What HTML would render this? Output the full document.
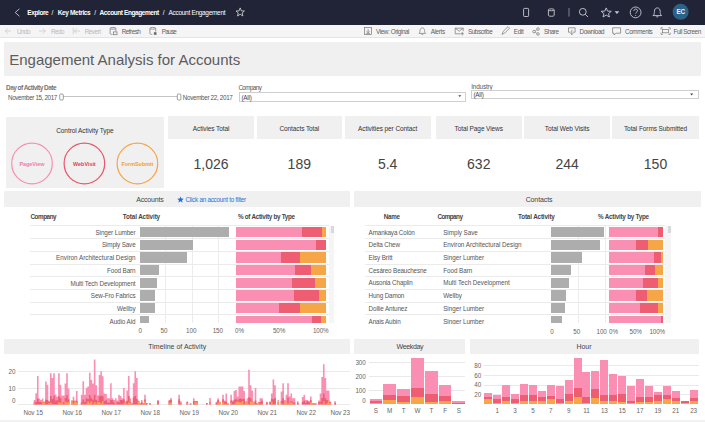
<!DOCTYPE html>
<html><head><meta charset="utf-8"><style>
*{margin:0;padding:0;box-sizing:border-box}
html,body{width:705px;height:422px;overflow:hidden;background:#fff;font-family:"Liberation Sans",sans-serif}
.t{position:absolute;white-space:nowrap;line-height:1.15}
.r{position:absolute}
svg{position:absolute;left:0;top:0;overflow:visible}
</style></head><body>

<div class="r" style="left:0.00px;top:0.00px;width:705.00px;height:24.50px;background:#212437;"></div>
<div class="t" style="left:27.30px;top:8.86px;font-size:6.5px;font-weight:700;color:#ffffff;letter-spacing:-0.406px;">Explore</div>
<div class="t" style="left:51.60px;top:8.86px;font-size:6.5px;font-weight:400;color:#ffffff;">/</div>
<div class="t" style="left:57.70px;top:8.86px;font-size:6.5px;font-weight:700;color:#ffffff;letter-spacing:-0.345px;">Key Metrics</div>
<div class="t" style="left:94.20px;top:8.86px;font-size:6.5px;font-weight:400;color:#ffffff;">/</div>
<div class="t" style="left:99.60px;top:8.86px;font-size:6.5px;font-weight:700;color:#ffffff;letter-spacing:-0.428px;">Account Engagement</div>
<div class="t" style="left:162.80px;top:8.86px;font-size:6.5px;font-weight:400;color:#ffffff;">/</div>
<div class="t" style="left:168.60px;top:8.86px;font-size:6.5px;font-weight:400;color:#ffffff;letter-spacing:-0.309px;">Account Engagement</div>
<svg width="705" height="25" viewBox="0 0 705 25">
<g fill="none" stroke="#c8cad2" stroke-width="0.9">
<path d="M19.4 8.9 L15.2 12.5 L19.4 16.2"/>
<path d="M240.2 7.9 L241.4 10.9 L244.4 11 L242.1 13 L242.9 16 L240.2 14.3 L237.5 16 L238.3 13 L236 11 L239 10.9 Z"/>
<rect x="523.6" y="8.4" width="5" height="8.1" rx="0.8"/>
<path d="M548.4 9.8 v5.6 c0 1.2 5.8 1.2 5.8 0 v-5.6 M548.4 9.8 c0 -1.3 5.8 -1.3 5.8 0 c0 1.3 -5.8 1.3 -5.8 0"/>
<path d="M569 8 v8.6" stroke="#8a8da0"/>
<circle cx="582.8" cy="11.8" r="3.4"/>
<path d="M585.3 14.3 L588 17"/>
<path d="M606.2 7.9 L607.6 11.1 L611.3 11.3 L608.5 13.6 L609.4 17 L606.2 15.1 L603 17 L603.9 13.6 L601.1 11.3 L604.8 11.1 Z"/>
<circle cx="635.6" cy="12.4" r="5.4"/>
<path d="M633.9 10.9 c0 -2.4 3.6 -2.4 3.6 -0.2 c0 1.4 -1.8 1.5 -1.8 2.9" />
<path d="M653 15.6 h8.6 c-1.4 -1.2 -1.4 -2.5 -1.4 -4.3 c0 -2 -1.3 -3.4 -2.9 -3.4 c-1.6 0 -2.9 1.4 -2.9 3.4 c0 1.8 0 3.1 -1.4 4.3 z M656.3 16.8 h2"/>
</g>
<path d="M614.6 11.3 h4.7 l-2.35 2.6 z" fill="#c8cad2"/>
<circle cx="635.7" cy="15.4" r="0.5" fill="#c8cad2"/>
<circle cx="680.6" cy="11.8" r="8" fill="#2c6189"/>
</svg>
<div class="t" style="left:680.60px;transform:translateX(-50%);top:8.47px;font-size:6.3px;font-weight:700;color:#f4f6f8;letter-spacing:-0.275px;">EC</div>
<div class="r" style="left:0.00px;top:24.50px;width:705.00px;height:13.00px;background:#f5f5f5;"></div>
<div class="r" style="left:0.00px;top:37.20px;width:705.00px;height:1.00px;background:#e4e4e4;"></div>
<div class="t" style="left:17.00px;top:27.97px;font-size:6.3px;font-weight:400;color:#b9b9b9;letter-spacing:-0.516px;">Undo</div>
<div class="t" style="left:51.00px;top:27.97px;font-size:6.3px;font-weight:400;color:#b9b9b9;letter-spacing:-0.516px;">Redo</div>
<div class="t" style="left:84.80px;top:27.97px;font-size:6.3px;font-weight:400;color:#b9b9b9;letter-spacing:-0.491px;">Revert</div>
<div class="t" style="left:121.70px;top:27.97px;font-size:6.3px;font-weight:400;color:#606060;letter-spacing:-0.480px;">Refresh</div>
<div class="t" style="left:161.70px;top:27.97px;font-size:6.3px;font-weight:400;color:#606060;letter-spacing:-0.672px;">Pause</div>
<div class="t" style="left:376.10px;top:27.97px;font-size:6.3px;font-weight:400;color:#606060;letter-spacing:-0.410px;">View: Original</div>
<div class="t" style="left:430.70px;top:27.97px;font-size:6.3px;font-weight:400;color:#606060;letter-spacing:-0.335px;">Alerts</div>
<div class="t" style="left:467.90px;top:27.97px;font-size:6.3px;font-weight:400;color:#606060;letter-spacing:-0.402px;">Subscribe</div>
<div class="t" style="left:513.80px;top:27.97px;font-size:6.3px;font-weight:400;color:#606060;letter-spacing:-0.340px;">Edit</div>
<div class="t" style="left:544.10px;top:27.97px;font-size:6.3px;font-weight:400;color:#606060;letter-spacing:-0.482px;">Share</div>
<div class="t" style="left:579.60px;top:27.97px;font-size:6.3px;font-weight:400;color:#606060;letter-spacing:-0.452px;">Download</div>
<div class="t" style="left:625.00px;top:27.97px;font-size:6.3px;font-weight:400;color:#606060;letter-spacing:-0.382px;">Comments</div>
<div class="t" style="left:673.50px;top:27.97px;font-size:6.3px;font-weight:400;color:#606060;letter-spacing:-0.414px;">Full Screen</div>
<svg width="705" height="40" viewBox="0 0 705 40">
<g fill="none" stroke="#c8c8c8" stroke-width="0.75">
<path d="M11 31 H5.2 M7.8 28.4 L5.2 31 L7.8 33.6"/>
<path d="M39 31 H45.4 M42.8 28.4 L45.4 31 L42.8 33.6"/>
<path d="M73.2 27.8 V34.2 M80 31 H74.4 M76.8 28.4 L74.4 31 L76.8 33.6"/>
</g>
<g fill="none" stroke="#7c7c7c" stroke-width="0.75">
<ellipse cx="113" cy="28.3" rx="2.9" ry="0.9"/>
<path d="M110.1 28.3 v5.2 c0 0.6 1.2 0.9 2.4 1 M115.9 28.3 v3.2"/>
<rect x="113.4" y="31.9" width="3.6" height="2.8" fill="#f5f5f5"/>
<ellipse cx="152.8" cy="28.3" rx="2.9" ry="0.9"/>
<path d="M149.9 28.3 v5.2 c0 0.6 1.2 0.9 2.4 1 M155.7 28.3 v3.4"/>
<rect x="153.9" y="32.2" width="2.6" height="2.6" fill="#6a6a6a" stroke="none"/>
<rect x="364.6" y="27.6" width="7" height="7"/>
<path d="M368.1 29 v3.6 M366.6 31.3 l1.5 1.5 l1.5 -1.5 M366.2 33.4 h3.8"/>
<path d="M419 33.4 h6.6 c-0.9 -0.8 -1 -1.7 -1 -2.9 c0 -1.4 -1 -2.6 -2.3 -2.6 c-1.3 0 -2.3 1.2 -2.3 2.6 c0 1.2 -0.1 2.1 -1 2.9 z M421.5 34.4 h1.6"/>
<path d="M455.2 28.2 h8 v3 M455.2 28.2 v5.6 h5 M455.2 28.2 l4 3 l4 -3 M462.2 32 v3.4 M460.5 33.7 h3.4"/>
<path d="M502 34.4 l1.2 -3 l4.8 -4.8 l1.6 1.6 l-4.8 4.8 z"/>
<circle cx="534" cy="31.6" r="1.3"/><circle cx="538" cy="29" r="1.3"/><circle cx="538" cy="34" r="1.3"/>
<path d="M535.2 31 l1.6 -1.2 M535.2 32.2 l1.6 1.2"/>
<path d="M568.5 27.8 h6.6 v4.4 h-2 M570.6 32.2 h-2.1 v-4.4 M571.8 29.8 v4.8 M570.4 33.2 l1.4 1.4 l1.4 -1.4"/>
<path d="M612.6 27.8 h8 v5.4 h-4.6 l-2 1.8 v-1.8 h-1.4 z"/>
<path d="M661 29.6 v-1.8 h1.8 M668.4 27.8 h1.8 v1.8 M670.2 32.6 v1.8 h-1.8 M662.8 34.4 h-1.8 v-1.8"/>
<rect x="662.6" y="29.4" width="6" height="3.4"/>
</g>
</svg>
<div class="r" style="left:4.10px;top:42.20px;width:697.00px;height:34.00px;background:#f0f0f0;"></div>
<div class="t" style="left:9.20px;top:51.30px;font-size:15px;font-weight:400;color:#5c5c5c;">Engagement Analysis for Accounts</div>
<div class="t" style="left:6.00px;top:84.16px;font-size:6.5px;font-weight:700;color:#5c5c5c;letter-spacing:-0.541px;-webkit-text-stroke:0.1px #fff">Day of Activity Date</div>
<div class="t" style="left:8.00px;top:94.27px;font-size:6.3px;font-weight:400;color:#555;letter-spacing:-0.371px;">November 15, 2017</div>
<div class="t" style="left:182.80px;top:94.27px;font-size:6.3px;font-weight:400;color:#555;letter-spacing:-0.330px;">November 22, 2017</div>
<div class="r" style="left:63.00px;top:95.70px;width:114.30px;height:1.60px;background:#c4c4c4;"></div>
<svg width="705" height="110" viewBox="0 0 705 110">
<rect x="59.7" y="94" width="3.6" height="6" rx="1" fill="#fff" stroke="#777" stroke-width="0.7"/>
<rect x="177.3" y="94" width="3.6" height="6" rx="1" fill="#fff" stroke="#777" stroke-width="0.7"/>
</svg>
<div class="t" style="left:238.40px;top:84.07px;font-size:6.3px;font-weight:400;color:#555;letter-spacing:-0.579px;">Company</div>
<div class="r" style="left:239.00px;top:92.30px;width:227.40px;height:9.50px;background:#fff;border:0.8px solid #cfcfcf;"></div>
<div class="t" style="left:241.50px;top:93.67px;font-size:6.3px;font-weight:400;color:#444;letter-spacing:-0.241px;">(All)</div>
<div class="t" style="left:471.20px;top:82.67px;font-size:6.3px;font-weight:400;color:#555;letter-spacing:-0.126px;">Industry</div>
<div class="r" style="left:471.00px;top:90.30px;width:227.60px;height:9.20px;background:#fff;border:0.8px solid #cfcfcf;"></div>
<div class="t" style="left:473.50px;top:91.47px;font-size:6.3px;font-weight:400;color:#444;letter-spacing:-0.241px;">(All)</div>
<svg width="705" height="110" viewBox="0 0 705 110"><path d="M458.3 95.3 h3 l-1.5 1.8z" fill="#444"/><path d="M690.2 93.6 h3 l-1.5 1.8z" fill="#444"/></svg>
<div class="r" style="left:6.00px;top:117.20px;width:157.50px;height:71.20px;background:#f0f0f0;"></div>
<div class="t" style="left:84.90px;transform:translateX(-50%);top:126.86px;font-size:6.5px;font-weight:400;color:#333;letter-spacing:-0.066px;">Control Activity Type</div>
<svg width="705" height="200" viewBox="0 0 705 200">
<circle cx="32" cy="163.5" r="20.3" fill="none" stroke="#f88fb2" stroke-width="1.2"/>
<circle cx="84.4" cy="163.5" r="20.3" fill="none" stroke="#e9566b" stroke-width="1.2"/>
<circle cx="137.4" cy="163.5" r="20.3" fill="none" stroke="#f6a548" stroke-width="1.2"/>
</svg>
<div class="t" style="left:32.00px;transform:translateX(-50%);top:160.78px;font-size:5.4px;font-weight:700;color:#f27ba5;">PageView</div>
<div class="t" style="left:84.40px;transform:translateX(-50%);top:160.78px;font-size:5.4px;font-weight:700;color:#e03d57;">WebVisit</div>
<div class="t" style="left:137.40px;transform:translateX(-50%);top:160.78px;font-size:5.4px;font-weight:700;color:#f49a37;">FormSubmit</div>
<div class="r" style="left:168.00px;top:116.20px;width:86.20px;height:22.70px;background:#f0f0f0;"></div>
<div class="t" style="left:211.10px;transform:translateX(-50%);top:124.76px;font-size:6.5px;font-weight:400;color:#333;letter-spacing:-0.081px;">Activies Total</div>
<div class="t" style="left:211.10px;transform:translateX(-50%);top:156.06px;font-size:14px;font-weight:400;color:#444;">1,026</div>
<div class="r" style="left:256.50px;top:116.20px;width:85.60px;height:22.70px;background:#f0f0f0;"></div>
<div class="t" style="left:299.30px;transform:translateX(-50%);top:124.76px;font-size:6.5px;font-weight:400;color:#333;letter-spacing:-0.088px;">Contacts Total</div>
<div class="t" style="left:299.30px;transform:translateX(-50%);top:156.06px;font-size:14px;font-weight:400;color:#444;">189</div>
<div class="r" style="left:344.50px;top:116.20px;width:86.30px;height:22.70px;background:#f0f0f0;"></div>
<div class="t" style="left:387.65px;transform:translateX(-50%);top:124.76px;font-size:6.5px;font-weight:400;color:#333;letter-spacing:-0.083px;">Activities per Contact</div>
<div class="t" style="left:387.65px;transform:translateX(-50%);top:156.06px;font-size:14px;font-weight:400;color:#444;">5.4</div>
<div class="r" style="left:435.90px;top:116.20px;width:85.70px;height:22.70px;background:#f0f0f0;"></div>
<div class="t" style="left:478.75px;transform:translateX(-50%);top:124.76px;font-size:6.5px;font-weight:400;color:#333;letter-spacing:-0.093px;">Total Page Views</div>
<div class="t" style="left:478.75px;transform:translateX(-50%);top:156.06px;font-size:14px;font-weight:400;color:#444;">632</div>
<div class="r" style="left:524.30px;top:116.20px;width:85.70px;height:22.70px;background:#f0f0f0;"></div>
<div class="t" style="left:567.15px;transform:translateX(-50%);top:124.76px;font-size:6.5px;font-weight:400;color:#333;letter-spacing:-0.086px;">Total Web Visits</div>
<div class="t" style="left:567.15px;transform:translateX(-50%);top:156.06px;font-size:14px;font-weight:400;color:#444;">244</div>
<div class="r" style="left:612.20px;top:116.20px;width:86.60px;height:22.70px;background:#f0f0f0;"></div>
<div class="t" style="left:655.50px;transform:translateX(-50%);top:124.76px;font-size:6.5px;font-weight:400;color:#333;letter-spacing:-0.093px;">Total Forms Submitted</div>
<div class="t" style="left:655.50px;transform:translateX(-50%);top:156.06px;font-size:14px;font-weight:400;color:#444;">150</div>
<div class="r" style="left:4.20px;top:191.20px;width:346.30px;height:16.30px;background:#f0f0f0;"></div>
<div class="t" style="left:136.20px;top:196.18px;font-size:7px;font-weight:400;color:#444;letter-spacing:-0.162px;">Accounts</div>
<svg width="705" height="210" viewBox="0 0 705 210"><path d="M180.5 196.4 L181.4 198.6 L183.8 198.7 L182 200.2 L182.6 202.5 L180.5 201.2 L178.4 202.5 L179 200.2 L177.2 198.7 L179.6 198.6 Z" fill="#2a6fd6"/></svg>
<div class="t" style="left:185.50px;top:196.47px;font-size:6.3px;font-weight:400;color:#2a6fd6;letter-spacing:-0.245px;">Click an account to filter</div>
<div class="t" style="left:30.50px;top:212.97px;font-size:6.3px;font-weight:700;color:#444;letter-spacing:-0.429px;">Company</div>
<div class="t" style="right:545.00px;top:212.97px;font-size:6.3px;font-weight:700;color:#444;letter-spacing:-0.117px;">Total Activity</div>
<div class="t" style="left:238.00px;top:212.97px;font-size:6.3px;font-weight:700;color:#444;letter-spacing:-0.278px;">% of Activity by Type</div>
<div style="position:absolute;left:0;top:0;width:705px;height:322.6px;overflow:hidden">
<div class="r" style="left:164.50px;top:226.00px;width:0.80px;height:97.00px;background:#ececec;"></div>
<div class="r" style="left:191.50px;top:226.00px;width:0.80px;height:97.00px;background:#ececec;"></div>
<div class="r" style="left:218.10px;top:226.00px;width:0.80px;height:97.00px;background:#ececec;"></div>
<div class="r" style="left:29.50px;top:225.40px;width:299.70px;height:1.10px;background:#ebebeb;"></div>
<div class="r" style="left:139.60px;top:226.90px;width:89.50px;height:10.20px;background:#adadad;"></div>
<div class="r" style="left:235.60px;top:226.90px;width:90.20px;height:10.20px;background:#fb8fb3;"></div>
<div class="r" style="left:302.35px;top:226.90px;width:23.45px;height:10.20px;background:#ee5d71;"></div>
<div class="r" style="left:322.19px;top:226.90px;width:3.61px;height:10.20px;background:#f7a647;"></div>
<div class="r" style="left:29.50px;top:238.11px;width:299.70px;height:1.10px;background:#ebebeb;"></div>
<div class="r" style="left:139.60px;top:239.61px;width:53.70px;height:10.20px;background:#adadad;"></div>
<div class="r" style="left:235.60px;top:239.61px;width:90.20px;height:10.20px;background:#fb8fb3;"></div>
<div class="r" style="left:315.88px;top:239.61px;width:9.92px;height:10.20px;background:#ee5d71;"></div>
<div class="r" style="left:325.80px;top:239.61px;width:0.00px;height:10.20px;background:#f7a647;"></div>
<div class="r" style="left:29.50px;top:250.82px;width:299.70px;height:1.10px;background:#ebebeb;"></div>
<div class="r" style="left:139.60px;top:252.32px;width:47.80px;height:10.20px;background:#adadad;"></div>
<div class="r" style="left:235.60px;top:252.32px;width:90.20px;height:10.20px;background:#fb8fb3;"></div>
<div class="r" style="left:280.70px;top:252.32px;width:45.10px;height:10.20px;background:#ee5d71;"></div>
<div class="r" style="left:299.64px;top:252.32px;width:26.16px;height:10.20px;background:#f7a647;"></div>
<div class="r" style="left:29.50px;top:263.53px;width:299.70px;height:1.10px;background:#ebebeb;"></div>
<div class="r" style="left:139.60px;top:265.03px;width:19.00px;height:10.20px;background:#adadad;"></div>
<div class="r" style="left:235.60px;top:265.03px;width:90.20px;height:10.20px;background:#fb8fb3;"></div>
<div class="r" style="left:295.13px;top:265.03px;width:30.67px;height:10.20px;background:#ee5d71;"></div>
<div class="r" style="left:311.37px;top:265.03px;width:14.43px;height:10.20px;background:#f7a647;"></div>
<div class="r" style="left:29.50px;top:276.24px;width:299.70px;height:1.10px;background:#ebebeb;"></div>
<div class="r" style="left:139.60px;top:277.74px;width:17.60px;height:10.20px;background:#adadad;"></div>
<div class="r" style="left:235.60px;top:277.74px;width:90.20px;height:10.20px;background:#fb8fb3;"></div>
<div class="r" style="left:292.43px;top:277.74px;width:33.37px;height:10.20px;background:#ee5d71;"></div>
<div class="r" style="left:314.98px;top:277.74px;width:10.82px;height:10.20px;background:#f7a647;"></div>
<div class="r" style="left:29.50px;top:288.95px;width:299.70px;height:1.10px;background:#ebebeb;"></div>
<div class="r" style="left:139.60px;top:290.45px;width:15.30px;height:10.20px;background:#adadad;"></div>
<div class="r" style="left:235.60px;top:290.45px;width:90.20px;height:10.20px;background:#fb8fb3;"></div>
<div class="r" style="left:294.23px;top:290.45px;width:31.57px;height:10.20px;background:#ee5d71;"></div>
<div class="r" style="left:319.49px;top:290.45px;width:6.31px;height:10.20px;background:#f7a647;"></div>
<div class="r" style="left:29.50px;top:301.66px;width:299.70px;height:1.10px;background:#ebebeb;"></div>
<div class="r" style="left:139.60px;top:303.16px;width:15.30px;height:10.20px;background:#adadad;"></div>
<div class="r" style="left:235.60px;top:303.16px;width:90.20px;height:10.20px;background:#fb8fb3;"></div>
<div class="r" style="left:278.90px;top:303.16px;width:46.90px;height:10.20px;background:#ee5d71;"></div>
<div class="r" style="left:299.64px;top:303.16px;width:26.16px;height:10.20px;background:#f7a647;"></div>
<div class="r" style="left:29.50px;top:314.37px;width:299.70px;height:1.10px;background:#ebebeb;"></div>
<div class="r" style="left:139.60px;top:315.87px;width:9.60px;height:10.20px;background:#adadad;"></div>
<div class="r" style="left:235.60px;top:315.87px;width:90.20px;height:10.20px;background:#fb8fb3;"></div>
<div class="r" style="left:312.27px;top:315.87px;width:13.53px;height:10.20px;background:#ee5d71;"></div>
<div class="r" style="left:321.29px;top:315.87px;width:4.51px;height:10.20px;background:#f7a647;"></div>
</div>
<div style="position:absolute;left:0;top:0;width:705px;height:323.6px;overflow:hidden">
<div class="t" style="right:569.50px;top:228.77px;font-size:6.3px;font-weight:400;color:#555;letter-spacing:-0.101px;">Singer Lumber</div>
<div class="t" style="right:569.50px;top:241.48px;font-size:6.3px;font-weight:400;color:#555;letter-spacing:-0.136px;">Simply Save</div>
<div class="t" style="right:569.50px;top:254.19px;font-size:6.3px;font-weight:400;color:#555;letter-spacing:0.010px;">Environ Architectural Design</div>
<div class="t" style="right:569.50px;top:266.90px;font-size:6.3px;font-weight:400;color:#555;letter-spacing:-0.101px;">Food Barn</div>
<div class="t" style="right:569.50px;top:279.61px;font-size:6.3px;font-weight:400;color:#555;letter-spacing:-0.095px;">Multi Tech Development</div>
<div class="t" style="right:569.50px;top:292.32px;font-size:6.3px;font-weight:400;color:#555;letter-spacing:-0.099px;">Sew-Fro Fabrics</div>
<div class="t" style="right:569.50px;top:305.03px;font-size:6.3px;font-weight:400;color:#555;letter-spacing:-0.047px;">Wellby</div>
<div class="t" style="right:569.50px;top:317.74px;font-size:6.3px;font-weight:400;color:#555;letter-spacing:-0.068px;">Audio Aid</div>
</div>
<div class="r" style="left:329.20px;top:225.50px;width:4.90px;height:97.50px;background:#f5f5f5;"></div>
<div class="r" style="left:331.30px;top:225.70px;width:2.40px;height:7.40px;background:#d9d9d9;"></div>
<div class="t" style="left:140.10px;transform:translateX(-50%);top:327.47px;font-size:6.3px;font-weight:400;color:#666;letter-spacing:-0.105px;">0</div>
<div class="t" style="left:164.00px;transform:translateX(-50%);top:327.47px;font-size:6.3px;font-weight:400;color:#666;letter-spacing:-0.105px;">50</div>
<div class="t" style="left:191.20px;transform:translateX(-50%);top:327.47px;font-size:6.3px;font-weight:400;color:#666;letter-spacing:-0.105px;">100</div>
<div class="t" style="left:217.80px;transform:translateX(-50%);top:327.47px;font-size:6.3px;font-weight:400;color:#666;letter-spacing:-0.105px;">150</div>
<div class="t" style="left:239.50px;transform:translateX(-50%);top:327.47px;font-size:6.3px;font-weight:400;color:#666;letter-spacing:-0.137px;">0%</div>
<div class="t" style="left:279.00px;transform:translateX(-50%);top:327.47px;font-size:6.3px;font-weight:400;color:#666;letter-spacing:-0.126px;">50%</div>
<div class="t" style="left:320.70px;transform:translateX(-50%);top:327.47px;font-size:6.3px;font-weight:400;color:#666;letter-spacing:-0.121px;">100%</div>
<div class="r" style="left:354.40px;top:190.60px;width:346.20px;height:16.90px;background:#f0f0f0;"></div>
<div class="t" style="left:539.00px;transform:translateX(-50%);top:196.08px;font-size:7px;font-weight:400;color:#444;letter-spacing:-0.116px;">Contacts</div>
<div class="t" style="left:391.70px;transform:translateX(-50%);top:212.87px;font-size:6.3px;font-weight:700;color:#444;letter-spacing:-0.264px;">Name</div>
<div class="t" style="left:437.40px;top:212.87px;font-size:6.3px;font-weight:700;color:#444;letter-spacing:-0.529px;">Company</div>
<div class="t" style="right:150.30px;top:212.87px;font-size:6.3px;font-weight:700;color:#444;letter-spacing:-0.153px;">Total Activity</div>
<div class="t" style="left:598.00px;top:212.87px;font-size:6.3px;font-weight:700;color:#444;letter-spacing:-0.225px;">% Activity by Type</div>
<div style="position:absolute;left:0;top:0;width:705px;height:322.6px;overflow:hidden">
<div class="r" style="left:577.70px;top:226.00px;width:0.80px;height:97.00px;background:#ececec;"></div>
<div class="r" style="left:604.50px;top:226.00px;width:0.80px;height:97.00px;background:#ececec;"></div>
<div class="r" style="left:365.10px;top:225.40px;width:300.10px;height:1.10px;background:#ebebeb;"></div>
<div class="r" style="left:551.30px;top:226.90px;width:53.20px;height:10.20px;background:#adadad;"></div>
<div class="r" style="left:609.40px;top:226.90px;width:54.10px;height:10.20px;background:#fb8fb3;"></div>
<div class="r" style="left:658.09px;top:226.90px;width:5.41px;height:10.20px;background:#ee5d71;"></div>
<div class="r" style="left:663.50px;top:226.90px;width:0.00px;height:10.20px;background:#f7a647;"></div>
<div class="r" style="left:365.10px;top:238.11px;width:300.10px;height:1.10px;background:#ebebeb;"></div>
<div class="r" style="left:551.30px;top:239.61px;width:48.90px;height:10.20px;background:#adadad;"></div>
<div class="r" style="left:609.40px;top:239.61px;width:54.10px;height:10.20px;background:#fb8fb3;"></div>
<div class="r" style="left:636.45px;top:239.61px;width:27.05px;height:10.20px;background:#ee5d71;"></div>
<div class="r" style="left:647.81px;top:239.61px;width:15.69px;height:10.20px;background:#f7a647;"></div>
<div class="r" style="left:365.10px;top:250.82px;width:300.10px;height:1.10px;background:#ebebeb;"></div>
<div class="r" style="left:551.30px;top:252.32px;width:30.40px;height:10.20px;background:#adadad;"></div>
<div class="r" style="left:609.40px;top:252.32px;width:54.10px;height:10.20px;background:#fb8fb3;"></div>
<div class="r" style="left:654.30px;top:252.32px;width:9.20px;height:10.20px;background:#ee5d71;"></div>
<div class="r" style="left:661.34px;top:252.32px;width:2.16px;height:10.20px;background:#f7a647;"></div>
<div class="r" style="left:365.10px;top:263.53px;width:300.10px;height:1.10px;background:#ebebeb;"></div>
<div class="r" style="left:551.30px;top:265.03px;width:19.50px;height:10.20px;background:#adadad;"></div>
<div class="r" style="left:609.40px;top:265.03px;width:54.10px;height:10.20px;background:#fb8fb3;"></div>
<div class="r" style="left:645.11px;top:265.03px;width:18.39px;height:10.20px;background:#ee5d71;"></div>
<div class="r" style="left:655.38px;top:265.03px;width:8.12px;height:10.20px;background:#f7a647;"></div>
<div class="r" style="left:365.10px;top:276.24px;width:300.10px;height:1.10px;background:#ebebeb;"></div>
<div class="r" style="left:551.30px;top:277.74px;width:17.90px;height:10.20px;background:#adadad;"></div>
<div class="r" style="left:609.40px;top:277.74px;width:54.10px;height:10.20px;background:#fb8fb3;"></div>
<div class="r" style="left:643.48px;top:277.74px;width:20.02px;height:10.20px;background:#ee5d71;"></div>
<div class="r" style="left:657.55px;top:277.74px;width:5.95px;height:10.20px;background:#f7a647;"></div>
<div class="r" style="left:365.10px;top:288.95px;width:300.10px;height:1.10px;background:#ebebeb;"></div>
<div class="r" style="left:551.30px;top:290.45px;width:14.90px;height:10.20px;background:#adadad;"></div>
<div class="r" style="left:609.40px;top:290.45px;width:54.10px;height:10.20px;background:#fb8fb3;"></div>
<div class="r" style="left:636.45px;top:290.45px;width:27.05px;height:10.20px;background:#ee5d71;"></div>
<div class="r" style="left:647.27px;top:290.45px;width:16.23px;height:10.20px;background:#f7a647;"></div>
<div class="r" style="left:365.10px;top:301.66px;width:300.10px;height:1.10px;background:#ebebeb;"></div>
<div class="r" style="left:551.30px;top:303.16px;width:14.10px;height:10.20px;background:#adadad;"></div>
<div class="r" style="left:609.40px;top:303.16px;width:54.10px;height:10.20px;background:#fb8fb3;"></div>
<div class="r" style="left:640.24px;top:303.16px;width:23.26px;height:10.20px;background:#ee5d71;"></div>
<div class="r" style="left:658.09px;top:303.16px;width:5.41px;height:10.20px;background:#f7a647;"></div>
<div class="r" style="left:365.10px;top:314.37px;width:300.10px;height:1.10px;background:#ebebeb;"></div>
<div class="r" style="left:551.30px;top:315.87px;width:11.10px;height:10.20px;background:#adadad;"></div>
<div class="r" style="left:609.40px;top:315.87px;width:54.10px;height:10.20px;background:#fb8fb3;"></div>
<div class="r" style="left:661.34px;top:315.87px;width:2.16px;height:10.20px;background:#ee5d71;"></div>
<div class="r" style="left:663.50px;top:315.87px;width:0.00px;height:10.20px;background:#f7a647;"></div>
</div>
<div style="position:absolute;left:0;top:0;width:705px;height:323.6px;overflow:hidden">
<div class="t" style="left:368.60px;top:228.57px;font-size:6.3px;font-weight:400;color:#555;letter-spacing:-0.137px;">Amankaya Col&oacute;n</div>
<div class="t" style="left:443.20px;top:228.57px;font-size:6.3px;font-weight:400;color:#555;letter-spacing:-0.032px;">Simply Save</div>
<div class="t" style="left:368.60px;top:241.28px;font-size:6.3px;font-weight:400;color:#555;letter-spacing:-0.130px;">Delta Chew</div>
<div class="t" style="left:443.20px;top:241.28px;font-size:6.3px;font-weight:400;color:#555;letter-spacing:-0.028px;">Environ Architectural Design</div>
<div class="t" style="left:368.60px;top:253.99px;font-size:6.3px;font-weight:400;color:#555;letter-spacing:-0.099px;">Elsy Britt</div>
<div class="t" style="left:443.20px;top:253.99px;font-size:6.3px;font-weight:400;color:#555;letter-spacing:-0.032px;">Singer Lumber</div>
<div class="t" style="left:368.60px;top:266.70px;font-size:6.3px;font-weight:400;color:#555;letter-spacing:-0.135px;">Ces&aacute;reo Beauchesne</div>
<div class="t" style="left:443.20px;top:266.70px;font-size:6.3px;font-weight:400;color:#555;letter-spacing:-0.033px;">Food Barn</div>
<div class="t" style="left:368.60px;top:279.41px;font-size:6.3px;font-weight:400;color:#555;letter-spacing:-0.122px;">Ausonia Chaplin</div>
<div class="t" style="left:443.20px;top:279.41px;font-size:6.3px;font-weight:400;color:#555;letter-spacing:-0.030px;">Multi Tech Development</div>
<div class="t" style="left:368.60px;top:292.12px;font-size:6.3px;font-weight:400;color:#555;letter-spacing:-0.148px;">Hung Damon</div>
<div class="t" style="left:443.20px;top:292.12px;font-size:6.3px;font-weight:400;color:#555;letter-spacing:-0.031px;">Wellby</div>
<div class="t" style="left:368.60px;top:304.83px;font-size:6.3px;font-weight:400;color:#555;letter-spacing:-0.115px;">Dollie Antunez</div>
<div class="t" style="left:443.20px;top:304.83px;font-size:6.3px;font-weight:400;color:#555;letter-spacing:-0.032px;">Singer Lumber</div>
<div class="t" style="left:368.60px;top:317.54px;font-size:6.3px;font-weight:400;color:#555;letter-spacing:-0.121px;">Anais Aubin</div>
<div class="t" style="left:443.20px;top:317.54px;font-size:6.3px;font-weight:400;color:#555;letter-spacing:-0.032px;">Singer Lumber</div>
</div>
<div class="r" style="left:665.20px;top:225.50px;width:5.60px;height:97.50px;background:#f5f5f5;"></div>
<div class="r" style="left:668.00px;top:225.70px;width:2.50px;height:7.40px;background:#d9d9d9;"></div>
<div class="t" style="left:551.90px;transform:translateX(-50%);top:327.67px;font-size:6.3px;font-weight:400;color:#666;letter-spacing:-0.105px;">0</div>
<div class="t" style="left:576.70px;transform:translateX(-50%);top:327.67px;font-size:6.3px;font-weight:400;color:#666;letter-spacing:-0.105px;">50</div>
<div class="t" style="left:601.60px;transform:translateX(-50%);top:327.67px;font-size:6.3px;font-weight:400;color:#666;letter-spacing:-0.105px;">100</div>
<div class="t" style="left:613.50px;transform:translateX(-50%);top:327.67px;font-size:6.3px;font-weight:400;color:#666;letter-spacing:-0.137px;">0%</div>
<div class="t" style="left:635.70px;transform:translateX(-50%);top:327.67px;font-size:6.3px;font-weight:400;color:#666;letter-spacing:-0.126px;">50%</div>
<div class="t" style="left:657.20px;transform:translateX(-50%);top:327.67px;font-size:6.3px;font-weight:400;color:#666;letter-spacing:-0.121px;">100%</div>
<div class="r" style="left:4.10px;top:338.90px;width:346.10px;height:15.40px;background:#f0f0f0;"></div>
<div class="t" style="left:177.20px;transform:translateX(-50%);top:342.68px;font-size:7px;font-weight:400;color:#444;letter-spacing:0.010px;">Timeline of Activity</div>
<div class="r" style="left:17.90px;top:370.50px;width:332.40px;height:0.80px;background:#e9e9e9;"></div>
<div class="r" style="left:17.90px;top:388.00px;width:332.40px;height:0.80px;background:#e9e9e9;"></div>
<div class="r" style="left:17.90px;top:403.90px;width:332.40px;height:0.80px;background:#e9e9e9;"></div>
<div class="t" style="right:689.70px;top:367.87px;font-size:6.3px;font-weight:400;color:#666;letter-spacing:-0.105px;">20</div>
<div class="t" style="right:689.70px;top:384.67px;font-size:6.3px;font-weight:400;color:#666;letter-spacing:-0.105px;">10</div>
<div class="t" style="right:689.70px;top:397.17px;font-size:6.3px;font-weight:400;color:#666;letter-spacing:-0.105px;">0</div>
<div class="t" style="left:33.20px;transform:translateX(-50%);top:409.47px;font-size:6.3px;font-weight:400;color:#666;letter-spacing:-0.100px;">Nov 15</div>
<div class="t" style="left:72.20px;transform:translateX(-50%);top:409.47px;font-size:6.3px;font-weight:400;color:#666;letter-spacing:-0.100px;">Nov 16</div>
<div class="t" style="left:111.20px;transform:translateX(-50%);top:409.47px;font-size:6.3px;font-weight:400;color:#666;letter-spacing:-0.100px;">Nov 17</div>
<div class="t" style="left:150.20px;transform:translateX(-50%);top:409.47px;font-size:6.3px;font-weight:400;color:#666;letter-spacing:-0.100px;">Nov 18</div>
<div class="t" style="left:189.20px;transform:translateX(-50%);top:409.47px;font-size:6.3px;font-weight:400;color:#666;letter-spacing:-0.100px;">Nov 19</div>
<div class="t" style="left:228.20px;transform:translateX(-50%);top:409.47px;font-size:6.3px;font-weight:400;color:#666;letter-spacing:-0.100px;">Nov 20</div>
<div class="t" style="left:267.20px;transform:translateX(-50%);top:409.47px;font-size:6.3px;font-weight:400;color:#666;letter-spacing:-0.100px;">Nov 21</div>
<div class="t" style="left:306.20px;transform:translateX(-50%);top:409.47px;font-size:6.3px;font-weight:400;color:#666;letter-spacing:-0.100px;">Nov 22</div>
<div class="t" style="left:340.20px;transform:translateX(-50%);top:409.47px;font-size:6.3px;font-weight:400;color:#666;letter-spacing:-0.100px;">Nov 23</div>
<div class="r" style="left:354.30px;top:339.10px;width:111.20px;height:14.90px;background:#f0f0f0;"></div>
<div class="t" style="left:409.90px;transform:translateX(-50%);top:343.08px;font-size:7px;font-weight:400;color:#444;letter-spacing:-0.323px;">Weekday</div>
<div class="r" style="left:369.30px;top:362.40px;width:96.20px;height:0.80px;background:#e9e9e9;"></div>
<div class="t" style="right:339.40px;top:359.27px;font-size:6.3px;font-weight:400;color:#666;letter-spacing:-0.105px;">300</div>
<div class="r" style="left:369.30px;top:376.20px;width:96.20px;height:0.80px;background:#e9e9e9;"></div>
<div class="t" style="right:339.40px;top:373.07px;font-size:6.3px;font-weight:400;color:#666;letter-spacing:-0.105px;">200</div>
<div class="r" style="left:369.30px;top:390.20px;width:96.20px;height:0.80px;background:#e9e9e9;"></div>
<div class="t" style="right:339.40px;top:387.07px;font-size:6.3px;font-weight:400;color:#666;letter-spacing:-0.105px;">100</div>
<div class="t" style="right:339.40px;top:396.97px;font-size:6.3px;font-weight:400;color:#666;letter-spacing:-0.105px;">0</div>
<div class="r" style="left:369.70px;top:398.90px;width:12.40px;height:5.10px;background:#fb8fb3;"></div>
<div class="r" style="left:369.70px;top:401.30px;width:12.40px;height:2.70px;background:#ee5d71;"></div>
<div class="r" style="left:369.70px;top:402.60px;width:12.40px;height:1.40px;background:#f7a647;"></div>
<div class="t" style="left:375.90px;transform:translateX(-50%);top:407.27px;font-size:6.3px;font-weight:400;color:#666;letter-spacing:-0.126px;">S</div>
<div class="r" style="left:383.30px;top:383.80px;width:12.60px;height:20.20px;background:#fb8fb3;"></div>
<div class="r" style="left:383.30px;top:395.40px;width:12.60px;height:8.60px;background:#ee5d71;"></div>
<div class="r" style="left:383.30px;top:399.90px;width:12.60px;height:4.10px;background:#f7a647;"></div>
<div class="t" style="left:389.60px;transform:translateX(-50%);top:407.27px;font-size:6.3px;font-weight:400;color:#666;letter-spacing:-0.157px;">M</div>
<div class="r" style="left:397.10px;top:388.60px;width:12.80px;height:15.40px;background:#fb8fb3;"></div>
<div class="r" style="left:397.10px;top:396.20px;width:12.80px;height:7.80px;background:#ee5d71;"></div>
<div class="r" style="left:397.10px;top:401.50px;width:12.80px;height:2.50px;background:#f7a647;"></div>
<div class="t" style="left:403.50px;transform:translateX(-50%);top:407.27px;font-size:6.3px;font-weight:400;color:#666;letter-spacing:-0.116px;">T</div>
<div class="r" style="left:411.10px;top:358.10px;width:12.80px;height:45.90px;background:#fb8fb3;"></div>
<div class="r" style="left:411.10px;top:388.00px;width:12.80px;height:16.00px;background:#ee5d71;"></div>
<div class="r" style="left:411.10px;top:397.20px;width:12.80px;height:6.80px;background:#f7a647;"></div>
<div class="t" style="left:417.50px;transform:translateX(-50%);top:407.27px;font-size:6.3px;font-weight:400;color:#666;letter-spacing:-0.179px;">W</div>
<div class="r" style="left:425.10px;top:371.00px;width:12.60px;height:33.00px;background:#fb8fb3;"></div>
<div class="r" style="left:425.10px;top:393.70px;width:12.60px;height:10.30px;background:#ee5d71;"></div>
<div class="r" style="left:425.10px;top:401.50px;width:12.60px;height:2.50px;background:#f7a647;"></div>
<div class="t" style="left:431.40px;transform:translateX(-50%);top:407.27px;font-size:6.3px;font-weight:400;color:#666;letter-spacing:-0.116px;">T</div>
<div class="r" style="left:439.00px;top:385.10px;width:12.10px;height:18.90px;background:#fb8fb3;"></div>
<div class="r" style="left:439.00px;top:396.20px;width:12.10px;height:7.80px;background:#ee5d71;"></div>
<div class="r" style="left:439.00px;top:400.50px;width:12.10px;height:3.50px;background:#f7a647;"></div>
<div class="t" style="left:445.05px;transform:translateX(-50%);top:407.27px;font-size:6.3px;font-weight:400;color:#666;letter-spacing:-0.116px;">F</div>
<div class="r" style="left:452.30px;top:401.30px;width:12.80px;height:2.70px;background:#fb8fb3;"></div>
<div class="r" style="left:452.30px;top:403.00px;width:12.80px;height:1.00px;background:#ee5d71;"></div>
<div class="r" style="left:452.30px;top:404.00px;width:12.80px;height:0.00px;background:#f7a647;"></div>
<div class="t" style="left:458.70px;transform:translateX(-50%);top:407.27px;font-size:6.3px;font-weight:400;color:#666;letter-spacing:-0.126px;">S</div>
<div class="r" style="left:469.50px;top:339.10px;width:229.50px;height:14.90px;background:#f0f0f0;"></div>
<div class="t" style="left:584.00px;transform:translateX(-50%);top:343.08px;font-size:7px;font-weight:400;color:#444;letter-spacing:-0.047px;">Hour</div>
<div class="r" style="left:483.60px;top:365.10px;width:215.00px;height:0.80px;background:#e9e9e9;"></div>
<div class="t" style="right:223.90px;top:361.97px;font-size:6.3px;font-weight:400;color:#666;letter-spacing:-0.105px;">80</div>
<div class="r" style="left:483.60px;top:374.80px;width:215.00px;height:0.80px;background:#e9e9e9;"></div>
<div class="t" style="right:223.90px;top:371.67px;font-size:6.3px;font-weight:400;color:#666;letter-spacing:-0.105px;">60</div>
<div class="r" style="left:483.60px;top:384.50px;width:215.00px;height:0.80px;background:#e9e9e9;"></div>
<div class="t" style="right:223.90px;top:381.37px;font-size:6.3px;font-weight:400;color:#666;letter-spacing:-0.105px;">40</div>
<div class="r" style="left:483.60px;top:394.40px;width:215.00px;height:0.80px;background:#e9e9e9;"></div>
<div class="t" style="right:223.90px;top:391.27px;font-size:6.3px;font-weight:400;color:#666;letter-spacing:-0.105px;">20</div>
<div class="r" style="left:484.20px;top:393.40px;width:8.03px;height:10.60px;background:#fb8fb3;"></div>
<div class="r" style="left:484.20px;top:396.50px;width:8.03px;height:7.50px;background:#ee5d71;"></div>
<div class="r" style="left:484.20px;top:399.00px;width:8.03px;height:5.00px;background:#f7a647;"></div>
<div class="r" style="left:493.13px;top:395.40px;width:8.03px;height:8.60px;background:#fb8fb3;"></div>
<div class="r" style="left:493.13px;top:399.00px;width:8.03px;height:5.00px;background:#ee5d71;"></div>
<div class="r" style="left:493.13px;top:403.00px;width:8.03px;height:1.00px;background:#f7a647;"></div>
<div class="t" style="left:497.14px;transform:translateX(-50%);top:407.37px;font-size:6.3px;font-weight:400;color:#666;letter-spacing:-0.105px;">1</div>
<div class="r" style="left:502.06px;top:384.50px;width:8.03px;height:19.50px;background:#fb8fb3;"></div>
<div class="r" style="left:502.06px;top:396.90px;width:8.03px;height:7.10px;background:#ee5d71;"></div>
<div class="r" style="left:502.06px;top:401.00px;width:8.03px;height:3.00px;background:#f7a647;"></div>
<div class="r" style="left:510.99px;top:394.20px;width:8.03px;height:9.80px;background:#fb8fb3;"></div>
<div class="r" style="left:510.99px;top:398.50px;width:8.03px;height:5.50px;background:#ee5d71;"></div>
<div class="r" style="left:510.99px;top:402.70px;width:8.03px;height:1.30px;background:#f7a647;"></div>
<div class="t" style="left:515.00px;transform:translateX(-50%);top:407.37px;font-size:6.3px;font-weight:400;color:#666;letter-spacing:-0.105px;">3</div>
<div class="r" style="left:519.92px;top:384.10px;width:8.03px;height:19.90px;background:#fb8fb3;"></div>
<div class="r" style="left:519.92px;top:395.20px;width:8.03px;height:8.80px;background:#ee5d71;"></div>
<div class="r" style="left:519.92px;top:401.00px;width:8.03px;height:3.00px;background:#f7a647;"></div>
<div class="r" style="left:528.85px;top:384.90px;width:8.03px;height:19.10px;background:#fb8fb3;"></div>
<div class="r" style="left:528.85px;top:395.40px;width:8.03px;height:8.60px;background:#ee5d71;"></div>
<div class="r" style="left:528.85px;top:400.60px;width:8.03px;height:3.40px;background:#f7a647;"></div>
<div class="t" style="left:532.87px;transform:translateX(-50%);top:407.37px;font-size:6.3px;font-weight:400;color:#666;letter-spacing:-0.105px;">5</div>
<div class="r" style="left:537.78px;top:390.70px;width:8.03px;height:13.30px;background:#fb8fb3;"></div>
<div class="r" style="left:537.78px;top:396.90px;width:8.03px;height:7.10px;background:#ee5d71;"></div>
<div class="r" style="left:537.78px;top:401.40px;width:8.03px;height:2.60px;background:#f7a647;"></div>
<div class="r" style="left:546.71px;top:384.50px;width:8.03px;height:19.50px;background:#fb8fb3;"></div>
<div class="r" style="left:546.71px;top:395.90px;width:8.03px;height:8.10px;background:#ee5d71;"></div>
<div class="r" style="left:546.71px;top:398.50px;width:8.03px;height:5.50px;background:#f7a647;"></div>
<div class="t" style="left:550.73px;transform:translateX(-50%);top:407.37px;font-size:6.3px;font-weight:400;color:#666;letter-spacing:-0.105px;">7</div>
<div class="r" style="left:555.64px;top:385.70px;width:8.03px;height:18.30px;background:#fb8fb3;"></div>
<div class="r" style="left:555.64px;top:399.00px;width:8.03px;height:5.00px;background:#ee5d71;"></div>
<div class="r" style="left:555.64px;top:402.70px;width:8.03px;height:1.30px;background:#f7a647;"></div>
<div class="r" style="left:564.57px;top:380.00px;width:8.03px;height:24.00px;background:#fb8fb3;"></div>
<div class="r" style="left:564.57px;top:394.20px;width:8.03px;height:9.80px;background:#ee5d71;"></div>
<div class="r" style="left:564.57px;top:400.60px;width:8.03px;height:3.40px;background:#f7a647;"></div>
<div class="t" style="left:568.58px;transform:translateX(-50%);top:407.37px;font-size:6.3px;font-weight:400;color:#666;letter-spacing:-0.105px;">9</div>
<div class="r" style="left:573.50px;top:358.10px;width:8.03px;height:45.90px;background:#fb8fb3;"></div>
<div class="r" style="left:573.50px;top:388.20px;width:8.03px;height:15.80px;background:#ee5d71;"></div>
<div class="r" style="left:573.50px;top:396.90px;width:8.03px;height:7.10px;background:#f7a647;"></div>
<div class="r" style="left:582.43px;top:371.50px;width:8.03px;height:32.50px;background:#fb8fb3;"></div>
<div class="r" style="left:582.43px;top:396.90px;width:8.03px;height:7.10px;background:#ee5d71;"></div>
<div class="r" style="left:582.43px;top:403.00px;width:8.03px;height:1.00px;background:#f7a647;"></div>
<div class="t" style="left:586.44px;transform:translateX(-50%);top:407.37px;font-size:6.3px;font-weight:400;color:#666;letter-spacing:-0.098px;">11</div>
<div class="r" style="left:591.36px;top:371.10px;width:8.03px;height:32.90px;background:#fb8fb3;"></div>
<div class="r" style="left:591.36px;top:388.60px;width:8.03px;height:15.40px;background:#ee5d71;"></div>
<div class="r" style="left:591.36px;top:397.90px;width:8.03px;height:6.10px;background:#f7a647;"></div>
<div class="r" style="left:600.29px;top:360.20px;width:8.03px;height:43.80px;background:#fb8fb3;"></div>
<div class="r" style="left:600.29px;top:395.40px;width:8.03px;height:8.60px;background:#ee5d71;"></div>
<div class="r" style="left:600.29px;top:400.60px;width:8.03px;height:3.40px;background:#f7a647;"></div>
<div class="t" style="left:604.30px;transform:translateX(-50%);top:407.37px;font-size:6.3px;font-weight:400;color:#666;letter-spacing:-0.105px;">13</div>
<div class="r" style="left:609.22px;top:373.80px;width:8.03px;height:30.20px;background:#fb8fb3;"></div>
<div class="r" style="left:609.22px;top:394.80px;width:8.03px;height:9.20px;background:#ee5d71;"></div>
<div class="r" style="left:609.22px;top:401.00px;width:8.03px;height:3.00px;background:#f7a647;"></div>
<div class="r" style="left:618.15px;top:375.80px;width:8.03px;height:28.20px;background:#fb8fb3;"></div>
<div class="r" style="left:618.15px;top:393.80px;width:8.03px;height:10.20px;background:#ee5d71;"></div>
<div class="r" style="left:618.15px;top:401.60px;width:8.03px;height:2.40px;background:#f7a647;"></div>
<div class="t" style="left:622.16px;transform:translateX(-50%);top:407.37px;font-size:6.3px;font-weight:400;color:#666;letter-spacing:-0.105px;">15</div>
<div class="r" style="left:627.08px;top:386.20px;width:8.03px;height:17.80px;background:#fb8fb3;"></div>
<div class="r" style="left:627.08px;top:400.60px;width:8.03px;height:3.40px;background:#ee5d71;"></div>
<div class="r" style="left:627.08px;top:402.70px;width:8.03px;height:1.30px;background:#f7a647;"></div>
<div class="r" style="left:636.01px;top:378.90px;width:8.03px;height:25.10px;background:#fb8fb3;"></div>
<div class="r" style="left:636.01px;top:396.90px;width:8.03px;height:7.10px;background:#ee5d71;"></div>
<div class="r" style="left:636.01px;top:401.60px;width:8.03px;height:2.40px;background:#f7a647;"></div>
<div class="t" style="left:640.02px;transform:translateX(-50%);top:407.37px;font-size:6.3px;font-weight:400;color:#666;letter-spacing:-0.105px;">17</div>
<div class="r" style="left:644.94px;top:386.20px;width:8.03px;height:17.80px;background:#fb8fb3;"></div>
<div class="r" style="left:644.94px;top:396.90px;width:8.03px;height:7.10px;background:#ee5d71;"></div>
<div class="r" style="left:644.94px;top:401.60px;width:8.03px;height:2.40px;background:#f7a647;"></div>
<div class="r" style="left:653.87px;top:392.10px;width:8.03px;height:11.90px;background:#fb8fb3;"></div>
<div class="r" style="left:653.87px;top:395.20px;width:8.03px;height:8.80px;background:#ee5d71;"></div>
<div class="r" style="left:653.87px;top:400.60px;width:8.03px;height:3.40px;background:#f7a647;"></div>
<div class="t" style="left:657.88px;transform:translateX(-50%);top:407.37px;font-size:6.3px;font-weight:400;color:#666;letter-spacing:-0.105px;">19</div>
<div class="r" style="left:662.80px;top:385.50px;width:8.03px;height:18.50px;background:#fb8fb3;"></div>
<div class="r" style="left:662.80px;top:394.80px;width:8.03px;height:9.20px;background:#ee5d71;"></div>
<div class="r" style="left:662.80px;top:399.00px;width:8.03px;height:5.00px;background:#f7a647;"></div>
<div class="r" style="left:671.73px;top:391.30px;width:8.03px;height:12.70px;background:#fb8fb3;"></div>
<div class="r" style="left:671.73px;top:397.50px;width:8.03px;height:6.50px;background:#ee5d71;"></div>
<div class="r" style="left:671.73px;top:401.00px;width:8.03px;height:3.00px;background:#f7a647;"></div>
<div class="t" style="left:675.75px;transform:translateX(-50%);top:407.37px;font-size:6.3px;font-weight:400;color:#666;letter-spacing:-0.105px;">21</div>
<div class="r" style="left:680.66px;top:400.60px;width:8.03px;height:3.40px;background:#fb8fb3;"></div>
<div class="r" style="left:680.66px;top:401.40px;width:8.03px;height:2.60px;background:#ee5d71;"></div>
<div class="r" style="left:680.66px;top:403.00px;width:8.03px;height:1.00px;background:#f7a647;"></div>
<div class="r" style="left:689.59px;top:390.10px;width:8.03px;height:13.90px;background:#fb8fb3;"></div>
<div class="r" style="left:689.59px;top:397.50px;width:8.03px;height:6.50px;background:#ee5d71;"></div>
<div class="r" style="left:689.59px;top:400.60px;width:8.03px;height:3.40px;background:#f7a647;"></div>
<div class="t" style="left:693.60px;transform:translateX(-50%);top:407.37px;font-size:6.3px;font-weight:400;color:#666;letter-spacing:-0.105px;">23</div>
<div class="r" style="left:0.00px;top:420.40px;width:705.00px;height:1.60px;background:#f1f1f1;"></div>
<svg width="705" height="422" viewBox="0 0 705 422"><path fill="#fb8fb3" d="M33.70 400.00h1.625V404.5h-1.625zM35.33 393.20h1.625V404.5h-1.625zM36.95 376.10h1.625V404.5h-1.625zM38.58 398.50h1.625V404.5h-1.625zM40.20 400.00h1.625V404.5h-1.625zM41.83 398.50h1.625V404.5h-1.625zM43.45 401.50h1.625V404.5h-1.625zM45.08 381.50h1.625V404.5h-1.625zM46.70 384.80h1.625V404.5h-1.625zM48.33 401.50h1.625V404.5h-1.625zM49.95 373.20h1.625V404.5h-1.625zM51.58 378.00h1.625V404.5h-1.625zM53.20 373.20h1.625V404.5h-1.625zM54.83 394.50h1.625V404.5h-1.625zM56.45 396.80h1.625V404.5h-1.625zM58.08 373.20h1.625V404.5h-1.625zM59.70 384.80h1.625V404.5h-1.625zM61.33 395.50h1.625V404.5h-1.625zM62.95 395.50h1.625V404.5h-1.625zM64.58 383.50h1.625V404.5h-1.625zM66.20 373.20h1.625V404.5h-1.625zM67.83 388.50h1.625V404.5h-1.625zM71.08 400.50h1.625V404.5h-1.625zM72.70 396.80h1.625V404.5h-1.625zM74.33 400.50h1.625V404.5h-1.625zM75.95 391.10h1.625V404.5h-1.625zM80.83 394.70h1.625V404.5h-1.625zM82.45 381.30h1.625V404.5h-1.625zM84.08 394.70h1.625V404.5h-1.625zM85.70 388.10h1.625V404.5h-1.625zM87.33 386.50h1.625V404.5h-1.625zM88.95 372.70h1.625V404.5h-1.625zM90.58 379.90h1.625V404.5h-1.625zM92.20 383.50h1.625V404.5h-1.625zM93.83 359.50h1.625V404.5h-1.625zM95.45 385.20h1.625V404.5h-1.625zM97.08 395.30h1.625V404.5h-1.625zM98.70 375.10h1.625V404.5h-1.625zM100.33 371.30h1.625V404.5h-1.625zM101.95 376.30h1.625V404.5h-1.625zM103.58 393.50h1.625V404.5h-1.625zM105.20 394.10h1.625V404.5h-1.625zM106.83 398.20h1.625V404.5h-1.625zM108.45 398.20h1.625V404.5h-1.625zM110.08 383.20h1.625V404.5h-1.625zM111.70 398.20h1.625V404.5h-1.625zM113.33 400.00h1.625V404.5h-1.625zM114.95 398.20h1.625V404.5h-1.625zM116.58 400.50h1.625V404.5h-1.625zM118.20 394.70h1.625V404.5h-1.625zM119.83 395.90h1.625V404.5h-1.625zM121.45 398.20h1.625V404.5h-1.625zM123.08 388.10h1.625V404.5h-1.625zM124.70 401.80h1.625V404.5h-1.625zM126.33 390.50h1.625V404.5h-1.625zM127.95 376.10h1.625V404.5h-1.625zM129.57 398.20h1.625V404.5h-1.625zM131.20 403.00h1.625V404.5h-1.625zM132.82 383.20h1.625V404.5h-1.625zM134.45 371.30h1.625V404.5h-1.625zM136.07 378.10h1.625V404.5h-1.625zM137.70 400.50h1.625V404.5h-1.625zM139.32 403.50h1.625V404.5h-1.625zM140.95 400.00h1.625V404.5h-1.625zM142.57 403.50h1.625V404.5h-1.625zM144.20 394.70h1.625V404.5h-1.625zM145.82 403.00h1.625V404.5h-1.625zM149.07 403.30h1.625V404.5h-1.625zM157.20 400.00h1.625V404.5h-1.625zM168.57 400.00h1.625V404.5h-1.625zM170.20 397.90h1.625V404.5h-1.625zM178.32 394.70h1.625V404.5h-1.625zM179.95 401.20h1.625V404.5h-1.625zM186.45 401.80h1.625V404.5h-1.625zM189.70 403.50h1.625V404.5h-1.625zM192.95 398.20h1.625V404.5h-1.625zM194.57 401.20h1.625V404.5h-1.625zM196.20 401.20h1.625V404.5h-1.625zM205.95 403.00h1.625V404.5h-1.625zM209.20 397.90h1.625V404.5h-1.625zM215.70 401.80h1.625V404.5h-1.625zM217.32 398.20h1.625V404.5h-1.625zM218.95 401.80h1.625V404.5h-1.625zM222.20 394.70h1.625V404.5h-1.625zM223.82 400.50h1.625V404.5h-1.625zM225.45 393.50h1.625V404.5h-1.625zM227.07 403.50h1.625V404.5h-1.625zM230.32 394.70h1.625V404.5h-1.625zM231.95 400.50h1.625V404.5h-1.625zM233.57 391.10h1.625V404.5h-1.625zM235.20 389.90h1.625V404.5h-1.625zM236.82 396.50h1.625V404.5h-1.625zM238.45 386.50h1.625V404.5h-1.625zM240.07 386.50h1.625V404.5h-1.625zM241.70 386.50h1.625V404.5h-1.625zM243.32 391.10h1.625V404.5h-1.625zM244.95 401.20h1.625V404.5h-1.625zM246.57 398.20h1.625V404.5h-1.625zM248.20 369.80h1.625V404.5h-1.625zM249.82 385.20h1.625V404.5h-1.625zM251.45 390.50h1.625V404.5h-1.625zM253.07 401.80h1.625V404.5h-1.625zM254.70 388.10h1.625V404.5h-1.625zM256.32 403.30h1.625V404.5h-1.625zM257.95 401.80h1.625V404.5h-1.625zM259.57 398.20h1.625V404.5h-1.625zM261.20 398.20h1.625V404.5h-1.625zM266.07 401.80h1.625V404.5h-1.625zM269.32 401.80h1.625V404.5h-1.625zM270.95 393.50h1.625V404.5h-1.625zM272.57 379.60h1.625V404.5h-1.625zM274.20 385.20h1.625V404.5h-1.625zM277.45 400.00h1.625V404.5h-1.625zM280.70 391.50h1.625V404.5h-1.625zM282.32 383.20h1.625V404.5h-1.625zM283.95 400.00h1.625V404.5h-1.625zM285.57 394.70h1.625V404.5h-1.625zM287.20 383.20h1.625V404.5h-1.625zM288.82 396.50h1.625V404.5h-1.625zM290.45 393.50h1.625V404.5h-1.625zM292.07 398.20h1.625V404.5h-1.625zM293.70 398.20h1.625V404.5h-1.625zM296.95 401.20h1.625V404.5h-1.625zM301.82 397.00h1.625V404.5h-1.625zM303.45 394.70h1.625V404.5h-1.625zM305.07 400.00h1.625V404.5h-1.625zM306.70 400.00h1.625V404.5h-1.625zM308.32 401.20h1.625V404.5h-1.625zM309.95 396.50h1.625V404.5h-1.625zM311.57 403.00h1.625V404.5h-1.625zM313.20 403.50h1.625V404.5h-1.625zM314.82 403.50h1.625V404.5h-1.625zM318.07 400.50h1.625V404.5h-1.625zM319.70 393.50h1.625V404.5h-1.625zM321.32 376.90h1.625V404.5h-1.625zM322.95 364.20h1.625V404.5h-1.625zM324.57 378.10h1.625V404.5h-1.625zM326.20 390.50h1.625V404.5h-1.625zM327.82 390.50h1.625V404.5h-1.625zM329.45 401.80h1.625V404.5h-1.625zM334.32 401.20h1.625V404.5h-1.625z"/><path fill="#ee5d71" d="M33.70 402.47h1.625V404.5h-1.625zM35.33 401.99h1.625V404.5h-1.625zM36.95 398.62h1.625V404.5h-1.625zM38.58 401.78h1.625V404.5h-1.625zM40.20 402.11h1.625V404.5h-1.625zM41.83 402.52h1.625V404.5h-1.625zM43.45 401.88h1.625V404.5h-1.625zM45.08 399.74h1.625V404.5h-1.625zM46.70 400.06h1.625V404.5h-1.625zM48.33 401.50h1.625V404.5h-1.625zM49.95 396.00h1.625V404.5h-1.625zM51.58 398.98h1.625V404.5h-1.625zM53.20 395.86h1.625V404.5h-1.625zM54.83 400.45h1.625V404.5h-1.625zM56.45 400.18h1.625V404.5h-1.625zM58.08 396.23h1.625V404.5h-1.625zM59.70 398.01h1.625V404.5h-1.625zM61.33 402.29h1.625V404.5h-1.625zM62.95 402.17h1.625V404.5h-1.625zM64.58 397.96h1.625V404.5h-1.625zM66.20 395.18h1.625V404.5h-1.625zM67.83 399.22h1.625V404.5h-1.625zM71.08 400.76h1.625V404.5h-1.625zM72.70 400.64h1.625V404.5h-1.625zM74.33 401.44h1.625V404.5h-1.625zM75.95 400.82h1.625V404.5h-1.625zM80.83 402.46h1.625V404.5h-1.625zM82.45 399.45h1.625V404.5h-1.625zM84.08 402.09h1.625V404.5h-1.625zM85.70 398.17h1.625V404.5h-1.625zM87.33 398.98h1.625V404.5h-1.625zM88.95 395.12h1.625V404.5h-1.625zM90.58 398.32h1.625V404.5h-1.625zM92.20 399.77h1.625V404.5h-1.625zM93.83 394.68h1.625V404.5h-1.625zM95.45 399.72h1.625V404.5h-1.625zM97.08 401.37h1.625V404.5h-1.625zM98.70 396.20h1.625V404.5h-1.625zM100.33 395.49h1.625V404.5h-1.625zM101.95 396.13h1.625V404.5h-1.625zM103.58 400.93h1.625V404.5h-1.625zM105.20 400.20h1.625V404.5h-1.625zM106.83 402.51h1.625V404.5h-1.625zM108.45 402.70h1.625V404.5h-1.625zM110.08 399.88h1.625V404.5h-1.625zM111.70 400.18h1.625V404.5h-1.625zM113.33 402.70h1.625V404.5h-1.625zM114.95 402.70h1.625V404.5h-1.625zM116.58 402.07h1.625V404.5h-1.625zM118.20 402.18h1.625V404.5h-1.625zM119.83 399.88h1.625V404.5h-1.625zM121.45 399.91h1.625V404.5h-1.625zM123.08 399.32h1.625V404.5h-1.625zM124.70 401.80h1.625V404.5h-1.625zM126.33 400.79h1.625V404.5h-1.625zM127.95 396.12h1.625V404.5h-1.625zM129.57 402.09h1.625V404.5h-1.625zM131.20 403.00h1.625V404.5h-1.625zM132.82 397.38h1.625V404.5h-1.625zM134.45 396.05h1.625V404.5h-1.625zM136.07 399.12h1.625V404.5h-1.625zM137.70 401.28h1.625V404.5h-1.625zM139.32 403.50h1.625V404.5h-1.625zM140.95 402.32h1.625V404.5h-1.625zM142.57 403.50h1.625V404.5h-1.625zM144.20 399.39h1.625V404.5h-1.625zM145.82 403.00h1.625V404.5h-1.625zM149.07 403.30h1.625V404.5h-1.625zM157.20 400.97h1.625V404.5h-1.625zM168.57 400.84h1.625V404.5h-1.625zM170.20 399.78h1.625V404.5h-1.625zM178.32 399.23h1.625V404.5h-1.625zM179.95 402.70h1.625V404.5h-1.625zM186.45 401.80h1.625V404.5h-1.625zM189.70 403.50h1.625V404.5h-1.625zM192.95 401.32h1.625V404.5h-1.625zM194.57 401.20h1.625V404.5h-1.625zM196.20 401.20h1.625V404.5h-1.625zM205.95 403.00h1.625V404.5h-1.625zM209.20 402.15h1.625V404.5h-1.625zM215.70 402.70h1.625V404.5h-1.625zM217.32 400.05h1.625V404.5h-1.625zM218.95 401.92h1.625V404.5h-1.625zM222.20 399.33h1.625V404.5h-1.625zM223.82 401.87h1.625V404.5h-1.625zM225.45 401.66h1.625V404.5h-1.625zM227.07 403.50h1.625V404.5h-1.625zM230.32 400.59h1.625V404.5h-1.625zM231.95 401.76h1.625V404.5h-1.625zM233.57 399.86h1.625V404.5h-1.625zM235.20 398.88h1.625V404.5h-1.625zM236.82 400.24h1.625V404.5h-1.625zM238.45 398.76h1.625V404.5h-1.625zM240.07 398.48h1.625V404.5h-1.625zM241.70 399.23h1.625V404.5h-1.625zM243.32 398.75h1.625V404.5h-1.625zM244.95 401.88h1.625V404.5h-1.625zM246.57 402.70h1.625V404.5h-1.625zM248.20 397.31h1.625V404.5h-1.625zM249.82 398.30h1.625V404.5h-1.625zM251.45 401.16h1.625V404.5h-1.625zM253.07 402.70h1.625V404.5h-1.625zM254.70 400.45h1.625V404.5h-1.625zM256.32 403.30h1.625V404.5h-1.625zM257.95 402.70h1.625V404.5h-1.625zM259.57 402.05h1.625V404.5h-1.625zM261.20 400.71h1.625V404.5h-1.625zM266.07 402.42h1.625V404.5h-1.625zM269.32 401.80h1.625V404.5h-1.625zM270.95 398.85h1.625V404.5h-1.625zM272.57 399.15h1.625V404.5h-1.625zM274.20 397.91h1.625V404.5h-1.625zM277.45 402.12h1.625V404.5h-1.625zM280.70 400.99h1.625V404.5h-1.625zM282.32 398.24h1.625V404.5h-1.625zM283.95 402.70h1.625V404.5h-1.625zM285.57 402.29h1.625V404.5h-1.625zM287.20 397.43h1.625V404.5h-1.625zM288.82 402.67h1.625V404.5h-1.625zM290.45 401.11h1.625V404.5h-1.625zM292.07 402.30h1.625V404.5h-1.625zM293.70 402.41h1.625V404.5h-1.625zM296.95 402.70h1.625V404.5h-1.625zM301.82 401.93h1.625V404.5h-1.625zM303.45 400.79h1.625V404.5h-1.625zM305.07 402.70h1.625V404.5h-1.625zM306.70 401.03h1.625V404.5h-1.625zM308.32 402.18h1.625V404.5h-1.625zM309.95 400.03h1.625V404.5h-1.625zM311.57 403.00h1.625V404.5h-1.625zM313.20 403.50h1.625V404.5h-1.625zM314.82 403.50h1.625V404.5h-1.625zM318.07 402.28h1.625V404.5h-1.625zM319.70 401.85h1.625V404.5h-1.625zM321.32 398.09h1.625V404.5h-1.625zM322.95 393.50h1.625V404.5h-1.625zM324.57 398.23h1.625V404.5h-1.625zM326.20 400.09h1.625V404.5h-1.625zM327.82 400.78h1.625V404.5h-1.625zM329.45 402.05h1.625V404.5h-1.625zM334.32 402.70h1.625V404.5h-1.625z"/><path fill="#f7a647" d="M33.70 403.28h1.625V404.5h-1.625zM35.33 404.50h1.625V404.5h-1.625zM36.95 404.50h1.625V404.5h-1.625zM38.58 404.50h1.625V404.5h-1.625zM40.20 404.50h1.625V404.5h-1.625zM41.83 402.52h1.625V404.5h-1.625zM43.45 402.59h1.625V404.5h-1.625zM45.08 404.50h1.625V404.5h-1.625zM46.70 404.50h1.625V404.5h-1.625zM48.33 403.19h1.625V404.5h-1.625zM49.95 402.66h1.625V404.5h-1.625zM51.58 404.50h1.625V404.5h-1.625zM53.20 404.50h1.625V404.5h-1.625zM54.83 404.50h1.625V404.5h-1.625zM56.45 404.50h1.625V404.5h-1.625zM58.08 402.23h1.625V404.5h-1.625zM59.70 402.89h1.625V404.5h-1.625zM61.33 402.53h1.625V404.5h-1.625zM62.95 404.50h1.625V404.5h-1.625zM64.58 401.56h1.625V404.5h-1.625zM66.20 402.82h1.625V404.5h-1.625zM67.83 402.08h1.625V404.5h-1.625zM71.08 401.05h1.625V404.5h-1.625zM72.70 403.53h1.625V404.5h-1.625zM74.33 401.44h1.625V404.5h-1.625zM75.95 402.62h1.625V404.5h-1.625zM80.83 404.50h1.625V404.5h-1.625zM82.45 403.53h1.625V404.5h-1.625zM84.08 404.50h1.625V404.5h-1.625zM85.70 403.47h1.625V404.5h-1.625zM87.33 401.23h1.625V404.5h-1.625zM88.95 402.92h1.625V404.5h-1.625zM90.58 401.22h1.625V404.5h-1.625zM92.20 404.50h1.625V404.5h-1.625zM93.83 402.34h1.625V404.5h-1.625zM95.45 403.69h1.625V404.5h-1.625zM97.08 402.11h1.625V404.5h-1.625zM98.70 402.26h1.625V404.5h-1.625zM100.33 403.55h1.625V404.5h-1.625zM101.95 401.25h1.625V404.5h-1.625zM103.58 404.50h1.625V404.5h-1.625zM105.20 404.50h1.625V404.5h-1.625zM106.83 404.50h1.625V404.5h-1.625zM108.45 404.50h1.625V404.5h-1.625zM110.08 404.50h1.625V404.5h-1.625zM111.70 404.50h1.625V404.5h-1.625zM113.33 404.50h1.625V404.5h-1.625zM114.95 402.70h1.625V404.5h-1.625zM116.58 404.50h1.625V404.5h-1.625zM118.20 404.50h1.625V404.5h-1.625zM119.83 404.50h1.625V404.5h-1.625zM121.45 404.50h1.625V404.5h-1.625zM123.08 403.62h1.625V404.5h-1.625zM124.70 401.80h1.625V404.5h-1.625zM126.33 404.50h1.625V404.5h-1.625zM127.95 402.21h1.625V404.5h-1.625zM129.57 403.08h1.625V404.5h-1.625zM131.20 403.00h1.625V404.5h-1.625zM132.82 404.50h1.625V404.5h-1.625zM134.45 404.50h1.625V404.5h-1.625zM136.07 404.50h1.625V404.5h-1.625zM137.70 401.28h1.625V404.5h-1.625zM139.32 403.50h1.625V404.5h-1.625zM140.95 404.50h1.625V404.5h-1.625zM142.57 403.50h1.625V404.5h-1.625zM144.20 401.35h1.625V404.5h-1.625zM145.82 404.50h1.625V404.5h-1.625zM149.07 403.30h1.625V404.5h-1.625zM157.20 404.50h1.625V404.5h-1.625zM168.57 402.77h1.625V404.5h-1.625zM170.20 402.59h1.625V404.5h-1.625zM178.32 404.50h1.625V404.5h-1.625zM179.95 403.28h1.625V404.5h-1.625zM186.45 403.29h1.625V404.5h-1.625zM189.70 404.50h1.625V404.5h-1.625zM192.95 404.50h1.625V404.5h-1.625zM194.57 401.88h1.625V404.5h-1.625zM196.20 402.49h1.625V404.5h-1.625zM205.95 404.50h1.625V404.5h-1.625zM209.20 403.03h1.625V404.5h-1.625zM215.70 404.50h1.625V404.5h-1.625zM217.32 402.71h1.625V404.5h-1.625zM218.95 401.92h1.625V404.5h-1.625zM222.20 402.30h1.625V404.5h-1.625zM223.82 403.65h1.625V404.5h-1.625zM225.45 403.69h1.625V404.5h-1.625zM227.07 403.50h1.625V404.5h-1.625zM230.32 402.79h1.625V404.5h-1.625zM231.95 404.50h1.625V404.5h-1.625zM233.57 404.50h1.625V404.5h-1.625zM235.20 402.28h1.625V404.5h-1.625zM236.82 401.15h1.625V404.5h-1.625zM238.45 402.28h1.625V404.5h-1.625zM240.07 402.43h1.625V404.5h-1.625zM241.70 401.06h1.625V404.5h-1.625zM243.32 404.50h1.625V404.5h-1.625zM244.95 401.88h1.625V404.5h-1.625zM246.57 403.36h1.625V404.5h-1.625zM248.20 404.50h1.625V404.5h-1.625zM249.82 401.50h1.625V404.5h-1.625zM251.45 401.69h1.625V404.5h-1.625zM253.07 402.70h1.625V404.5h-1.625zM254.70 404.50h1.625V404.5h-1.625zM256.32 403.30h1.625V404.5h-1.625zM257.95 402.70h1.625V404.5h-1.625zM259.57 404.50h1.625V404.5h-1.625zM261.20 403.65h1.625V404.5h-1.625zM266.07 404.50h1.625V404.5h-1.625zM269.32 404.50h1.625V404.5h-1.625zM270.95 401.49h1.625V404.5h-1.625zM272.57 404.50h1.625V404.5h-1.625zM274.20 404.50h1.625V404.5h-1.625zM277.45 402.12h1.625V404.5h-1.625zM280.70 403.28h1.625V404.5h-1.625zM282.32 404.50h1.625V404.5h-1.625zM283.95 402.70h1.625V404.5h-1.625zM285.57 402.29h1.625V404.5h-1.625zM287.20 403.47h1.625V404.5h-1.625zM288.82 402.67h1.625V404.5h-1.625zM290.45 402.15h1.625V404.5h-1.625zM292.07 403.34h1.625V404.5h-1.625zM293.70 404.50h1.625V404.5h-1.625zM296.95 404.50h1.625V404.5h-1.625zM301.82 404.50h1.625V404.5h-1.625zM303.45 404.50h1.625V404.5h-1.625zM305.07 404.50h1.625V404.5h-1.625zM306.70 404.50h1.625V404.5h-1.625zM308.32 404.50h1.625V404.5h-1.625zM309.95 402.49h1.625V404.5h-1.625zM311.57 403.00h1.625V404.5h-1.625zM313.20 404.50h1.625V404.5h-1.625zM314.82 403.50h1.625V404.5h-1.625zM318.07 404.50h1.625V404.5h-1.625zM319.70 403.50h1.625V404.5h-1.625zM321.32 404.50h1.625V404.5h-1.625zM322.95 401.26h1.625V404.5h-1.625zM324.57 404.50h1.625V404.5h-1.625zM326.20 403.26h1.625V404.5h-1.625zM327.82 401.01h1.625V404.5h-1.625zM329.45 403.02h1.625V404.5h-1.625zM334.32 404.50h1.625V404.5h-1.625z"/></svg>
</body></html>
